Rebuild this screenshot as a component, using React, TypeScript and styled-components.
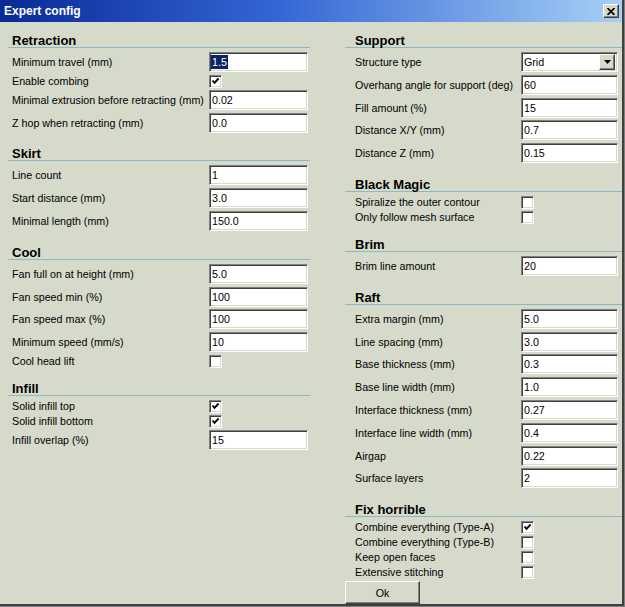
import React from "react";
import styled, { createGlobalStyle } from "styled-components";

const FACE = "#d6dacb";

type Field =
  | { kind: "text"; label: string; value: string; selected?: boolean }
  | { kind: "check"; label: string; checked: boolean }
  | { kind: "select"; label: string; value: string };

type Section = { title: string; fields: Field[] };

type ColumnSpec = {
  indent: number;
  labelWidth: number;
  controlWidth: number;
  sections: Section[];
};

const leftSections: Section[] = [
  {
    title: "Retraction",
    fields: [
      { kind: "text", label: "Minimum travel (mm)", value: "1.5", selected: true },
      { kind: "check", label: "Enable combing", checked: true },
      { kind: "text", label: "Minimal extrusion before retracting (mm)", value: "0.02" },
      { kind: "text", label: "Z hop when retracting (mm)", value: "0.0" },
    ],
  },
  {
    title: "Skirt",
    fields: [
      { kind: "text", label: "Line count", value: "1" },
      { kind: "text", label: "Start distance (mm)", value: "3.0" },
      { kind: "text", label: "Minimal length (mm)", value: "150.0" },
    ],
  },
  {
    title: "Cool",
    fields: [
      { kind: "text", label: "Fan full on at height (mm)", value: "5.0" },
      { kind: "text", label: "Fan speed min (%)", value: "100" },
      { kind: "text", label: "Fan speed max (%)", value: "100" },
      { kind: "text", label: "Minimum speed (mm/s)", value: "10" },
      { kind: "check", label: "Cool head lift", checked: false },
    ],
  },
  {
    title: "Infill",
    fields: [
      { kind: "check", label: "Solid infill top", checked: true },
      { kind: "check", label: "Solid infill bottom", checked: true },
      { kind: "text", label: "Infill overlap (%)", value: "15" },
    ],
  },
];

const rightSections: Section[] = [
  {
    title: "Support",
    fields: [
      { kind: "select", label: "Structure type", value: "Grid" },
      { kind: "text", label: "Overhang angle for support (deg)", value: "60" },
      { kind: "text", label: "Fill amount (%)", value: "15" },
      { kind: "text", label: "Distance X/Y (mm)", value: "0.7" },
      { kind: "text", label: "Distance Z (mm)", value: "0.15" },
    ],
  },
  {
    title: "Black Magic",
    fields: [
      { kind: "check", label: "Spiralize the outer contour", checked: false },
      { kind: "check", label: "Only follow mesh surface", checked: false },
    ],
  },
  {
    title: "Brim",
    fields: [{ kind: "text", label: "Brim line amount", value: "20" }],
  },
  {
    title: "Raft",
    fields: [
      { kind: "text", label: "Extra margin (mm)", value: "5.0" },
      { kind: "text", label: "Line spacing (mm)", value: "3.0" },
      { kind: "text", label: "Base thickness (mm)", value: "0.3" },
      { kind: "text", label: "Base line width (mm)", value: "1.0" },
      { kind: "text", label: "Interface thickness (mm)", value: "0.27" },
      { kind: "text", label: "Interface line width (mm)", value: "0.4" },
      { kind: "text", label: "Airgap", value: "0.22" },
      { kind: "text", label: "Surface layers", value: "2" },
    ],
  },
  {
    title: "Fix horrible",
    fields: [
      { kind: "check", label: "Combine everything (Type-A)", checked: true },
      { kind: "check", label: "Combine everything (Type-B)", checked: false },
      { kind: "check", label: "Keep open faces", checked: false },
      { kind: "check", label: "Extensive stitching", checked: false },
    ],
  },
];

const GlobalStyle = createGlobalStyle`
  html, body {
    margin: 0;
    padding: 0;
    background: ${FACE};
  }
  body {
    font-family: "Liberation Sans", Arial, sans-serif;
    font-size: 10.7px;
    color: #000;
  }
`;

const Window = styled.div`
  width: 625px;
  height: 607px;
  box-sizing: border-box;
  padding: 0 3px 3px 0;
  background: ${FACE};
  box-shadow: inset -1px -1px 0 #808080, inset -3px -3px 0 #404040;
  display: flex;
  flex-direction: column;
  overflow: hidden;
`;

const TitleBar = styled.div`
  height: 22px;
  flex: none;
  display: flex;
  align-items: center;
  justify-content: space-between;
  padding: 0 3px 0 4px;
  background: linear-gradient(to right, #0a2a96 0%, #3566d4 45%, #a6d0f6 100%);
`;

const TitleText = styled.span`
  color: #fff;
  font-weight: bold;
  font-size: 12px;
`;

const raised = `
  border-top: 1px solid #fff;
  border-left: 1px solid #fff;
  border-right: 1px solid #404040;
  border-bottom: 1px solid #404040;
  box-shadow: inset -1px -1px 0 #808080;
  background: ${FACE};
`;

const sunken = `
  border-top: 1px solid #808080;
  border-left: 1px solid #808080;
  border-right: 1px solid #fff;
  border-bottom: 1px solid #fff;
  box-shadow: inset 1px 1px 0 #404040, inset -1px -1px 0 ${FACE};
  background: #fff;
`;

const CloseButton = styled.div`
  width: 16px;
  height: 14px;
  box-sizing: border-box;
  ${raised}
  display: flex;
  align-items: center;
  justify-content: center;
`;

const Body = styled.div`
  flex: 1;
  display: grid;
  grid-template-columns: 302px 277px;
  column-gap: 35px;
  padding-left: 8px;
  align-items: start;
`;

const Column = styled.div`
  display: flex;
  flex-direction: column;
`;

const Heading = styled.div<{ $indent: number }>`
  height: 26px;
  box-sizing: border-box;
  display: flex;
  align-items: flex-end;
  padding-left: ${(p) => p.$indent}px;
  border-bottom: 1px solid #8cb8c2;
  margin-bottom: 4px;
  font-size: 13px;
  font-weight: bold;
  line-height: 13px;
`;

const Row = styled.div<{ $indent: number; $label: number; $control: number; $compact: boolean }>`
  display: grid;
  grid-template-columns: ${(p) => p.$label}px ${(p) => p.$control}px;
  align-items: start;
  padding-left: ${(p) => p.$indent}px;
  height: ${(p) => (p.$compact ? 15 : 22.8)}px;
`;

const Label = styled.span<{ $compact: boolean }>`
  white-space: nowrap;
  line-height: ${(p) => (p.$compact ? 13 : 20)}px;
`;

const TextBox = styled.div`
  height: 20px;
  box-sizing: border-box;
  ${sunken}
  padding-left: 1px;
  display: flex;
  align-items: center;
  white-space: nowrap;
`;

const Value = styled.span<{ $selected?: boolean }>`
  padding: 0 1px;
  line-height: 14px;
  background: ${(p) => (p.$selected ? "#0a246a" : "transparent")};
  color: ${(p) => (p.$selected ? "#fff" : "#000")};
`;

const CheckBox = styled.div`
  width: 13px;
  height: 13px;
  box-sizing: border-box;
  ${sunken}
  display: flex;
  align-items: center;
  justify-content: center;
`;

const SelectBox = styled(TextBox)`
  justify-content: space-between;
  padding-right: 2px;
`;

const DropButton = styled.div`
  width: 16px;
  height: 16px;
  box-sizing: border-box;
  ${raised}
  display: flex;
  align-items: center;
  justify-content: center;
`;

const OkButton = styled.div`
  width: 75px;
  height: 23px;
  box-sizing: border-box;
  ${raised}
  display: flex;
  align-items: center;
  justify-content: center;
`;

const CheckMark = () => (
  <svg width="9" height="9" viewBox="0 0 9 9">
    <path d="M1.5 3.5 L3.5 5.8 L7.6 1.5" fill="none" stroke="#000" strokeWidth="1.9" />
  </svg>
);

const CloseGlyph = () => (
  <svg width="8" height="7" viewBox="0 0 8 7">
    <path d="M0.5 0 L7.5 7 M7.5 0 L0.5 7" stroke="#000" strokeWidth="1.7" />
  </svg>
);

const DownArrow = () => (
  <svg width="7" height="4" viewBox="0 0 7 4">
    <polygon points="0,0 7,0 3.5,4" fill="#000" />
  </svg>
);

const Control = ({ field }: { field: Field }) => {
  if (field.kind === "check") {
    return <CheckBox>{field.checked && <CheckMark />}</CheckBox>;
  }
  if (field.kind === "select") {
    return (
      <SelectBox>
        <Value>{field.value}</Value>
        <DropButton>
          <DownArrow />
        </DropButton>
      </SelectBox>
    );
  }
  return (
    <TextBox>
      <Value $selected={field.selected}>{field.value}</Value>
    </TextBox>
  );
};

const SettingsColumn = ({ spec, children }: { spec: ColumnSpec; children?: React.ReactNode }) => (
  <Column>
    {spec.sections.map((section) => (
      <React.Fragment key={section.title}>
        <Heading $indent={spec.indent}>{section.title}</Heading>
        {section.fields.map((field) => {
          const compact = field.kind === "check";
          return (
            <Row
              key={field.label}
              $indent={spec.indent}
              $label={spec.labelWidth}
              $control={compact ? 13 : spec.controlWidth}
              $compact={compact}
            >
              <Label $compact={compact}>{field.label}</Label>
              <Control field={field} />
            </Row>
          );
        })}
      </React.Fragment>
    ))}
    {children}
  </Column>
);

const left: ColumnSpec = { indent: 4, labelWidth: 197, controlWidth: 99, sections: leftSections };
const right: ColumnSpec = { indent: 10, labelWidth: 166, controlWidth: 97, sections: rightSections };

export default function App() {
  return (
    <>
      <GlobalStyle />
      <Window>
        <TitleBar>
          <TitleText>Expert config</TitleText>
          <CloseButton>
            <CloseGlyph />
          </CloseButton>
        </TitleBar>
        <Body>
          <SettingsColumn spec={left} />
          <SettingsColumn spec={right}>
            <OkButton>Ok</OkButton>
          </SettingsColumn>
        </Body>
      </Window>
    </>
  );
}
